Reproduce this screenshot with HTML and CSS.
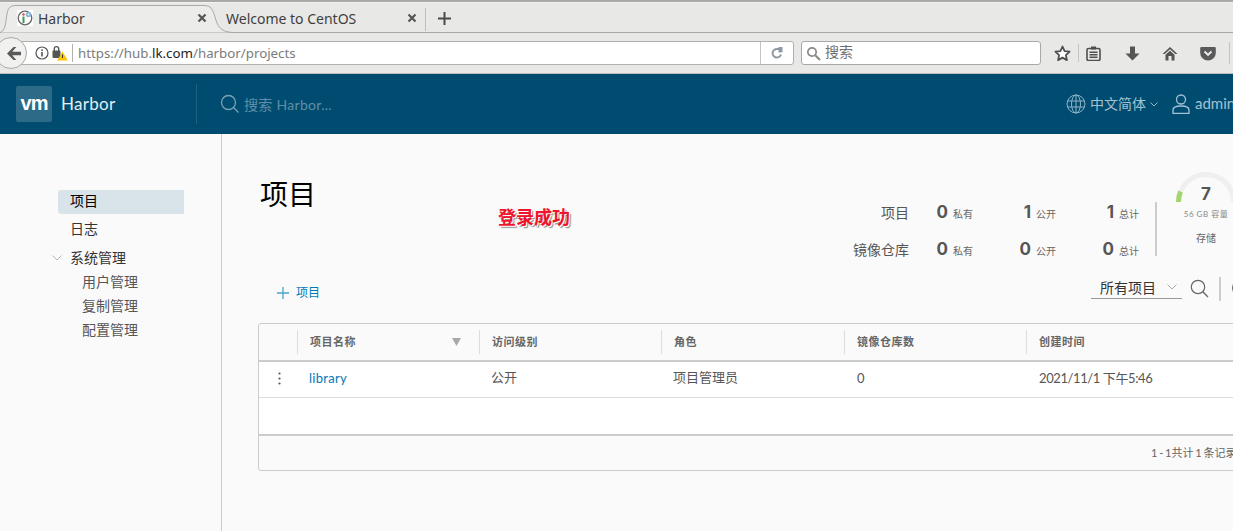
FILE: index.html
```html
<!DOCTYPE html>
<html lang="zh">
<head>
<meta charset="utf-8">
<title>Harbor</title>
<link rel="stylesheet" href="styles.css">
</head>
<body>
<div class="page">
  <div class="browser">
    <div class="tabstrip">
      <svg class="tab-shape" width="232" height="30" viewBox="0 0 232 30"><path d="M0 29.500C5 28 5.500 22 6.500 14C7.500 6 9 2.500 16 2.500H204C211 2.500 213 7 215 14C217.500 23 220 28.500 232 29.500" fill="#ececeb" stroke="#a9a9a7" stroke-width="1"/></svg>
      <div class="tab tab-active">
        <svg class="favicon" width="16" height="16" viewBox="0 0 16 16"><rect width="16" height="16" fill="#fff"/><circle cx="8" cy="8" r="6.800" fill="none" stroke="#666" stroke-width="1.300"/><rect x="5.500" y="6.500" width="2" height="6.500" fill="#3f9a4e"/><circle cx="6.500" cy="4.500" r="1.200" fill="#c9503c"/><circle cx="11.500" cy="4.500" r="2.800" fill="#8ab4dc"/><circle cx="11.500" cy="4.500" r="1" fill="#e8f0f8"/></svg>
        <span class="tab-title">Harbor</span>
        <svg class="tab-close" width="10" height="10" viewBox="0 0 10 10"><path d="M1.500 1.500l7 7M8.500 1.500l-7 7" stroke="#555" stroke-width="2.200"/></svg>
      </div>
      <div class="tab tab-plain">
        <span class="tab-title">Welcome to CentOS</span>
        <svg class="tab-close" width="10" height="10" viewBox="0 0 10 10"><path d="M1.500 1.500l7 7M8.500 1.500l-7 7" stroke="#555" stroke-width="2.200"/></svg>
      </div>
      <svg class="new-tab" width="13" height="13" viewBox="0 0 13 13"><path d="M6.500 0v13M0 6.500h13" stroke="#4a4a4a" stroke-width="2"/></svg>
    </div>
    <div class="navbar">
      <div class="urlbar">
        <svg class="info" width="14" height="14" viewBox="0 0 14 14"><circle cx="7" cy="7" r="6" fill="none" stroke="#555" stroke-width="1.200"/><rect x="6.200" y="6" width="1.600" height="4.500" fill="#555"/><rect x="6.200" y="3.400" width="1.600" height="1.600" fill="#555"/></svg>
        <svg class="lock" width="16" height="16" viewBox="0 0 16 16"><rect x="0.500" y="5.500" width="8" height="7.500" rx="1" fill="#555"/><path d="M2.300 6V3.800a2.200 2.200 0 0 1 4.400 0V6" fill="none" stroke="#555" stroke-width="1.400"/><path d="M10.500 6.500L15.800 15.500H5.200z" fill="#fdc200"/><rect x="10" y="9.500" width="1" height="3.500" fill="#333"/></svg>
        <span class="url"><span class="url-dim">https://hub.</span>lk.com<span class="url-dim">/harbor/projects</span></span>
        <span class="reload"><svg width="12" height="12" viewBox="0 0 12 12"><path d="M10 7.500A4.300 4.300 0 1 1 6.500 2h2" fill="none" stroke="#8f98a3" stroke-width="2"/><path d="M7.500 0v5.500l4-.2V0z" fill="#8f98a3"/></svg></span>
      </div>
      <div class="back"><svg width="14" height="13" viewBox="0 0 14 13"><path d="M6.500 0L0 6.500 6.500 13h2.800L5.200 8.300H14V4.700H5.200L9.300 0z" fill="#5a5a5a"/></svg></div>
      <div class="searchbar">
        <svg width="15" height="15" viewBox="0 0 15 15"><circle cx="6" cy="6" r="4.200" fill="none" stroke="#888" stroke-width="1.700"/><path d="M9.200 9.200L14 14" stroke="#888" stroke-width="2"/></svg>
        <span class="searchbar-text">搜索</span>
      </div>
      <div class="tools">
        <svg class="t-star" width="17" height="17" viewBox="0 0 17 17"><path d="M8.500 1.500l2.100 4.600 5 .6-3.700 3.400 1 5-4.400-2.500-4.400 2.500 1-5L1.400 6.700l5-.6z" fill="#fff" stroke="#4f4f4f" stroke-width="1.800" stroke-linejoin="round"/></svg>
        <span class="t-sep"></span>
        <svg class="t-clip" width="15" height="15" viewBox="0 0 15 15"><rect x="1" y="2.500" width="13" height="12" rx="1.500" fill="none" stroke="#4f4f4f" stroke-width="1.600"/><rect x="5" y="0.500" width="5" height="3" fill="#4f4f4f"/><path d="M3.500 6.300h8M3.500 8.800h8M3.500 11.300h8" stroke="#4f4f4f" stroke-width="1.500"/></svg>
        <svg class="t-down" width="15" height="15" viewBox="0 0 15 15"><path d="M5 0.500h5v7h4.500L7.500 14.500 0.500 7.500H5z" fill="#555"/></svg>
        <svg class="t-home" width="16" height="15" viewBox="0 0 16 15"><path d="M8 1L0.500 8h2.200L8 3.300 13.300 8h2.200z" fill="#555"/><path d="M3.500 8.700L8 4.800l4.500 3.900V14.500H9.500V10h-3v4.500h-3z" fill="#555"/></svg>
        <svg class="t-pocket" width="16" height="15" viewBox="0 0 16 15"><path d="M1.500 1h13A1.200 1.200 0 0 1 15.800 2.200V7a7.800 7.500 0 0 1-15.600 0V2.200A1.200 1.200 0 0 1 1.500 1z" fill="#5a5a5a"/><path d="M4.500 5.500L8 8.800l3.500-3.300" fill="none" stroke="#e8e8e7" stroke-width="2"/></svg>
        <span class="t-sep t-sep-last"></span>
      </div>
    </div>
  </div>

  <header class="app-header">
    <div class="brand">
      <div class="logo">vm</div>
      <span class="brand-name">Harbor</span>
    </div>
    <div class="global-search">
      <svg width="20" height="20" viewBox="0 0 20 20"><circle cx="8.500" cy="8.500" r="7" fill="none" stroke="#7ba3b8" stroke-width="1.300"/><path d="M13.500 13.500L18.500 18.500" stroke="#7ba3b8" stroke-width="1.300"/></svg>
      <span>搜索 Harbor...</span>
    </div>
    <div class="header-right">
      <svg class="globe" width="20" height="20" viewBox="0 0 20 20"><g fill="none" stroke="#8db4c8" stroke-width="1"><circle cx="10" cy="10" r="9"/><ellipse cx="10" cy="10" rx="4.500" ry="9"/><path d="M10 1v18M1.500 7h17M1.500 13h17"/></g></svg>
      <span class="lang">中文简体</span>
      <svg class="lang-caret" width="8" height="5" viewBox="0 0 8 5"><path d="M0.500 0.500L4 4l3.500-3.500" fill="none" stroke="#8db4c8"/></svg>
      <svg class="user-icon" width="18" height="20" viewBox="0 0 18 20"><g fill="none" stroke="#a3c2d2" stroke-width="1.300"><circle cx="9" cy="5.500" r="4.500"/><path d="M1 19.500v-3.500c0-2.500 3.500-4 8-4s8 1.500 8 4v3.500z"/></g></svg>
      <span class="username">admin</span>
    </div>
  </header>

  <div class="body-row">
    <nav class="sidebar">
      <a class="nav-item nav-active">项目</a>
      <a class="nav-item">日志</a>
      <div class="nav-group">
        <svg width="10" height="6" viewBox="0 0 10 6"><path d="M0.500 0.500L5 5l4.500-4.500" fill="none" stroke="#b5b5b5" stroke-width="1"/></svg>
        <span>系统管理</span>
      </div>
      <a class="nav-sub">用户管理</a>
      <a class="nav-sub">复制管理</a>
      <a class="nav-sub">配置管理</a>
    </nav>

    <main class="content">
      <div class="summary">
        <h1 class="page-title">项目</h1>
        <div class="stats">
          <span class="stat-label">项目</span>
          <span class="stat"><b>0</b><small>私有</small></span>
          <span class="stat"><b>1</b><small>公开</small></span>
          <span class="stat"><b>1</b><small>总计</small></span>
          <span class="stat-label">镜像仓库</span>
          <span class="stat"><b>0</b><small>私有</small></span>
          <span class="stat"><b>0</b><small>公开</small></span>
          <span class="stat"><b>0</b><small>总计</small></span>
        </div>
        <div class="storage">
          <svg class="gauge" width="62" height="32" viewBox="0 0 62 32"><path d="M3.500 32A27.500 27.500 0 0 1 58.500 32" fill="none" stroke="#efefef" stroke-width="5"/><path d="M3.500 32A27.500 27.500 0 0 1 5.500 21.500" fill="none" stroke="#a3d56e" stroke-width="5"/></svg>
          <div class="gauge-num">7</div>
          <div class="gauge-cap">56 GB 容量</div>
          <div class="gauge-label">存储</div>
        </div>
      </div>

      <div class="actions">
        <a class="add-btn">
          <svg width="12" height="12" viewBox="0 0 12 12"><path d="M6 0v12M0 6h12" stroke="#49a3d0" stroke-width="1.300"/></svg>
          <span>项目</span>
        </a>
        <div class="filter">
          <span>所有项目</span>
          <svg width="10" height="6" viewBox="0 0 10 6"><path d="M0.500 0.500L5 5l4.500-4.500" fill="none" stroke="#aaa" stroke-width="1"/></svg>
        </div>
        <svg class="filter-search" width="19" height="19" viewBox="0 0 19 19"><circle cx="8" cy="8" r="6.700" fill="none" stroke="#666" stroke-width="1.200"/><path d="M12.800 12.800L18 18" stroke="#666" stroke-width="1.300"/></svg>
        <span class="filter-sep"></span>
        <span class="refresh-edge"></span>
      </div>

      <div class="grid">
        <div class="grid-row grid-head">
          <div class="cell cell-menu"></div>
          <div class="cell cell-col cell-sort">项目名称
            <svg width="9" height="8" viewBox="0 0 9 8"><path d="M0 0h9L4.500 8z" fill="#a8a8a8"/></svg>
          </div>
          <div class="cell cell-col">访问级别</div>
          <div class="cell cell-col">角色</div>
          <div class="cell cell-col">镜像仓库数</div>
          <div class="cell cell-col cell-last">创建时间</div>
        </div>
        <div class="grid-row grid-data">
          <div class="cell cell-menu"><svg width="3" height="13" viewBox="0 0 3 13"><circle cx="1.500" cy="1.500" r="1.100" fill="#555"/><circle cx="1.500" cy="6.500" r="1.100" fill="#555"/><circle cx="1.500" cy="11.500" r="1.100" fill="#555"/></svg></div>
          <div class="cell"><a class="link">library</a></div>
          <div class="cell cell-cjk">公开</div>
          <div class="cell cell-cjk">项目管理员</div>
          <div class="cell cell-count">0</div>
          <div class="cell cell-last cell-date">2021/11/1 下午5:46</div>
        </div>
        <div class="grid-empty"></div>
        <div class="grid-foot"><span>1 - 1共计 1 条记录</span></div>
      </div>
    </main>
  </div>

  <div class="note">登录成功</div>
</div>
</body>
</html>
```

FILE: styles.css
```css
* { box-sizing: border-box; }
html, body { margin: 0; padding: 0; }
body { font-family: "Lato", "Noto Sans CJK SC", sans-serif; background: #fafafa; }
.page { position: relative; width: 1233px; height: 531px; overflow: hidden; display: flex; flex-direction: column; background: #fafafa; }

/* browser chrome */
.browser { height: 74px; flex: none; background: #e8e8e7; border-top: 2px solid #a9a9a7; border-bottom: 1px solid #bdbdbb; font-family: "Noto Sans", "Noto Sans CJK SC", sans-serif; box-shadow: inset 0 1px 0 #f2f2f1; }
.tabstrip { height: 31px; display: flex; align-items: flex-end; border-bottom: 1px solid #a9a9a7; padding-left: 6px; position: relative; }
.tab-shape { position: absolute; left: 0; top: 1px; }
.tab { height: 28px; display: flex; align-items: center; flex: none; position: relative; font-size: 14px; color: #3f3f3f; }
.tab-active { width: 213px; padding-left: 11px; }
.tab-plain { width: 207px; padding-left: 7px; }
.tab-plain::after { content: ""; position: absolute; right: 0; top: 4px; bottom: 1px; width: 1px; background: #bdbdbb; }
.favicon { flex: none; margin-right: 5px; }
.tab-title { flex: 1; white-space: nowrap; }
.tab-close { flex: none; margin-right: 12px; }
.tab-plain .tab-close { margin-right: 9px; }
.new-tab { flex: none; margin: 0 0 7px 12px; }
.navbar { height: 40px; display: flex; align-items: center; position: relative; }
.back { position: absolute; left: -5px; top: 4px; width: 32px; height: 32px; padding-left: 11px; display: flex; align-items: center; background: #f1f1f0; border: 1px solid #a9a9a7; border-radius: 50%; }
.urlbar { width: 794px; height: 24px; flex: none; background: #fff; border: 1px solid #b0b0ae; border-radius: 3px; display: flex; align-items: center; padding-left: 34px; font-size: 13.300px; color: #222; }
.info { flex: none; }
.lock { flex: none; margin-left: 3px; margin-right: 4px; }
.url { flex: 1; border-left: 1px solid #b0b0ae; padding-left: 5px; line-height: 18px; white-space: nowrap; }
.url-dim { color: #7b7b7b; }
.reload { flex: none; width: 33px; height: 22px; border-left: 1px solid #c4c4c2; display: flex; align-items: center; justify-content: center; }
.searchbar { width: 240px; height: 24px; margin-left: 7px; flex: none; background: #fff; border: 1px solid #a9a9a7; border-radius: 3px; display: flex; align-items: center; gap: 4px; padding-left: 4px; font-size: 14px; color: #6f6f6f; }
.searchbar-text { line-height: 20px; margin-top: -3px; }
.tools { display: flex; align-items: center; flex: none; margin-left: 13px; }
.t-sep { width: 1px; height: 18px; background: #c4c4c2; margin-left: 7px; flex: none; }
.t-clip { margin-left: 7px; }
.t-down { margin-left: 24px; }
.t-home { margin-left: 22px; }
.t-pocket { margin-left: 22px; }
.t-sep-last { margin-left: 13px; height: 22px; }

/* app header */
.app-header { height: 60px; flex: none; background: #004c70; display: flex; align-items: center; color: #fff; }
.brand { width: 197px; height: 40px; flex: none; display: flex; align-items: center; padding-left: 16px; border-right: 1px solid #22607f; }
.logo { width: 36px; height: 36px; background: #2c6a88; border-radius: 2px; font-family: "Liberation Sans", sans-serif; font-weight: 700; font-size: 20px; letter-spacing: -1px; text-align: center; line-height: 34px; flex: none; }
.brand-name { margin-left: 9px; margin-top: -2px; font-size: 17px; letter-spacing: .3px; color: #e4edf2; }
.global-search { display: flex; align-items: center; margin-left: 23px; gap: 4px; font-size: 14px; color: #5f8ea6; letter-spacing: .3px; }
.header-right { margin-left: auto; display: flex; align-items: center; color: #a3c2d2; font-size: 14px; flex: none; width: 167px; white-space: nowrap; }
.globe { flex: none; }
.lang { margin-left: 4px; margin-top: -2px; }
.lang-caret { margin-left: 4px; flex: none; }
.user-icon { margin-left: 14px; flex: none; }
.username { margin-left: 5px; font-size: 15px; margin-top: -2px; }

/* body */
.body-row { flex: 1; display: flex; min-height: 0; }
.sidebar { width: 222px; flex: none; border-right: 1px solid #ccc; padding: 56px 0 0 58px; display: flex; flex-direction: column; font-size: 14px; color: #333; }
.nav-item { width: 126px; height: 24px; line-height: 22px; padding-left: 12px; margin-bottom: 4px; }
.nav-active { background: #d9e4ea; border-radius: 3px 0 0 3px; color: #000; }
.nav-group { height: 24px; line-height: 22px; display: flex; align-items: center; margin-left: -6px; gap: 8px; }
.nav-sub { height: 24px; line-height: 24px; padding-left: 24px; color: #565656; }

.content { flex: none; width: 1010px; padding: 36px 0 0 36px; display: flex; flex-direction: column; }
.summary { height: 100px; display: flex; align-items: flex-start; }
.page-title { margin: 9px 0 0 2px; font-size: 28px; line-height: 30px; font-weight: 400; color: #000; }
.stats { margin-left: auto; margin-top: 23px; display: grid; grid-template-columns: 70px 64px 83px 83px; grid-auto-rows: 37px; align-items: center; font-size: 14px; color: #565656; }
.stat-label { text-align: right; }
.stat { display: flex; justify-content: flex-end; align-items: baseline; gap: 5px; }
.stat b { font-size: 17px; font-weight: 700; color: #565656; font-family: "Inter", sans-serif; }
.stat small { font-size: 10px; color: #666; }
.storage { position: relative; width: 70px; height: 100px; margin-left: 16px; flex: none; margin-right: 7px; text-align: center; color: #666; }
.storage::before { content: ""; position: absolute; left: 0; top: 32px; height: 54px; width: 2px; background: #ccc; }
.gauge { position: absolute; left: 20px; top: 0; }
.gauge-num { position: absolute; left: 20px; width: 62px; top: 14px; font-size: 17px; font-weight: 700; line-height: 20px; color: #565656; font-family: "Inter", sans-serif; }
.gauge-cap { position: absolute; left: 20px; width: 62px; top: 39px; font-size: 8px; line-height: 10px; color: #888; white-space: nowrap; letter-spacing: .5px; }
.gauge-label { position: absolute; left: 20px; width: 62px; top: 62px; font-size: 10px; line-height: 12px; color: #666; }

.actions { height: 53px; display: flex; align-items: flex-start; position: relative; }
.add-btn { display: flex; align-items: center; gap: 7px; margin: 16px 0 0 19px; font-size: 12px; line-height: 14px; color: #0079b8; }
.filter { margin-left: auto; margin-right: 8px; width: 91px; height: 24px; margin-top: 5px; border-bottom: 1px solid #999; display: flex; align-items: center; justify-content: space-between; padding: 0 5px 0 9px; font-size: 14px; color: #333; }
.filter-search { flex: none; margin-top: 9px; }
.filter-sep { width: 2px; height: 24px; margin-top: 7px; margin-left: 10px; background: #ccc; flex: none; }
.refresh-edge { width: 18px; height: 18px; margin-top: 9px; margin-left: 11px; margin-right: -18px; border: 1px solid #666; border-radius: 50%; flex: none; }

.grid { width: 1000px; border: 1px solid #ccc; border-radius: 3px; background: #fafafa; font-size: 13px; color: #565656; }
.grid-row { display: grid; grid-template-columns: 38px 182px 182px 183px 182px 1fr; }
.grid-head { height: 38px; border-bottom: 2px solid #ccc; align-items: center; font-size: 11px; font-weight: 700; color: #666; letter-spacing: .5px; }
.grid-data { height: 36px; background: #fff; border-bottom: 1px solid #ddd; align-items: center; padding-bottom: 3px; }
.cell { padding-left: 12px; white-space: nowrap; }
.cell-menu { padding-left: 19px; display: flex; align-items: center; }
.cell-col { height: 24px; line-height: 24px; border-left: 1px solid #ddd; }
.cell-sort { display: flex; align-items: center; justify-content: space-between; padding-right: 18px; }
.cell-cjk { padding-bottom: 3px; }
.cell-count { padding-left: 13px; }
.cell-date { padding-left: 13px; padding-bottom: 2px; letter-spacing: -.4px; }
.link { color: #0079b8; font-size: 13px; letter-spacing: .3px; }
.grid-empty { height: 38px; background: #fff; border-bottom: 2px solid #ccc; }
.grid-foot { height: 34px; display: flex; align-items: center; padding: 0 0 2px 892px; font-size: 11px; color: #666; white-space: nowrap; word-spacing: -1px; }

.note { position: absolute; left: 498px; top: 206px; font-family: "Noto Sans CJK SC", sans-serif; font-weight: 700; font-size: 18px; line-height: 20px; color: #f0142d; text-shadow: 1px 1px 0 #fff, 2px 2px 1px #888; }
```
